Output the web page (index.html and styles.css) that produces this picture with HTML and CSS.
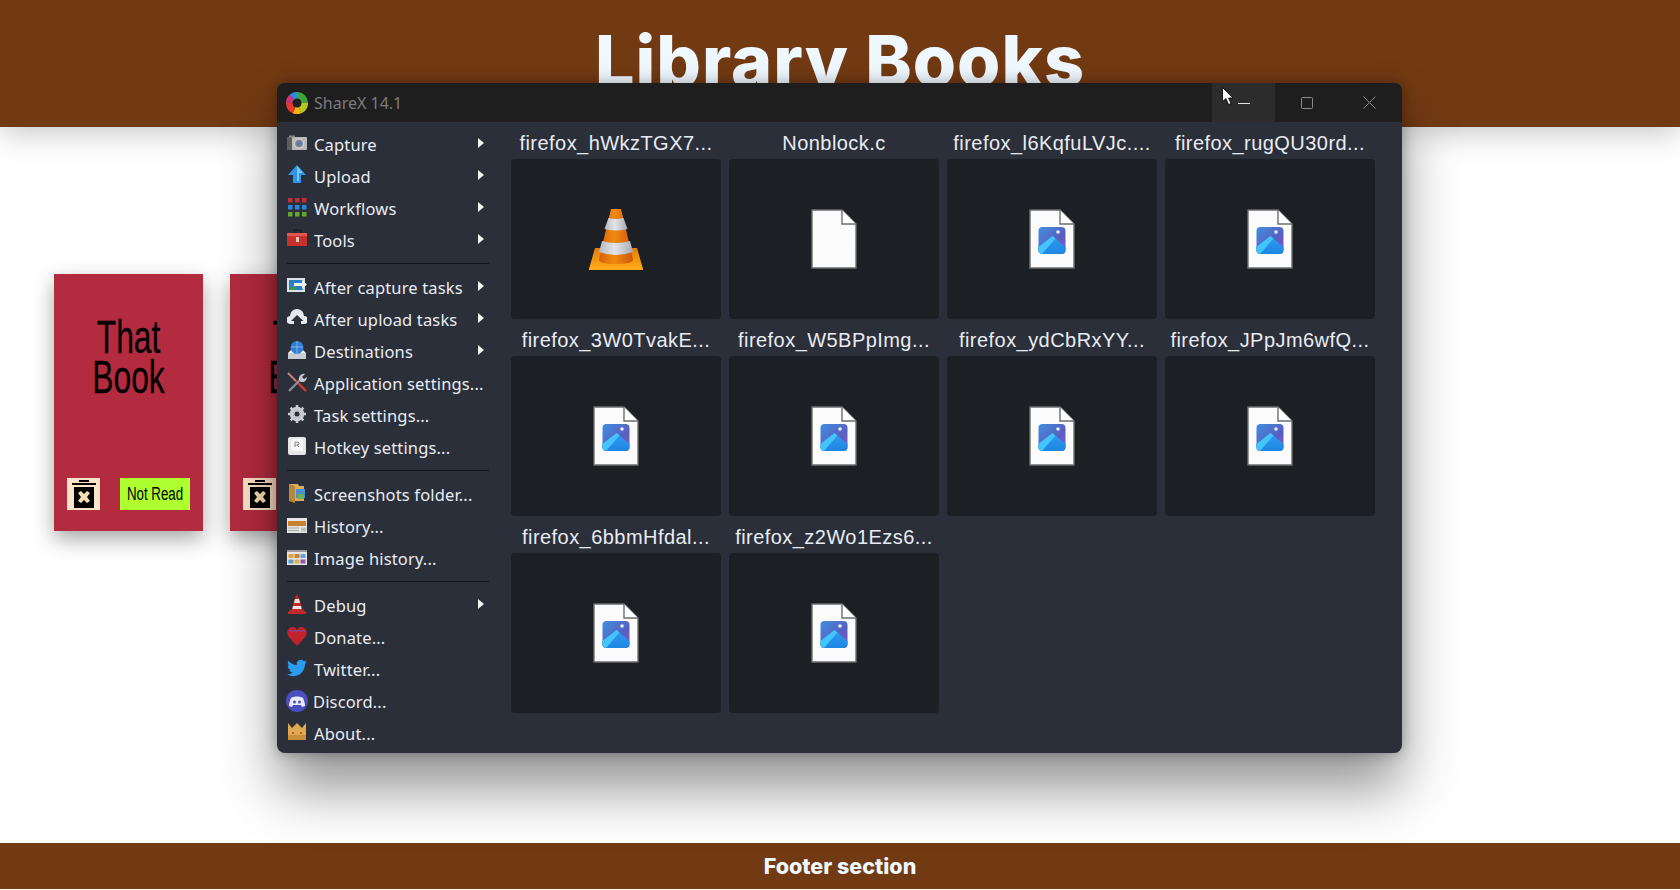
FILE: index.html
```html
<!DOCTYPE html>
<html lang="en">
<head>
<meta charset="utf-8">
<title>Library Books</title>
<link rel="stylesheet" href="styles.css">
</head>
<body>
<svg class="defs" width="0" height="0" aria-hidden="true">
  <defs>
    <linearGradient id="imgbg" x1="0" y1="0" x2="1" y2="1">
      <stop offset="0" stop-color="#3f8fe0"/><stop offset=".6" stop-color="#5a5fc0"/><stop offset="1" stop-color="#8a55c8"/>
    </linearGradient>
    <linearGradient id="mount" x1="0" y1="0" x2="0" y2="1">
      <stop offset="0" stop-color="#2f9cf2"/><stop offset="1" stop-color="#1f86e2"/>
    </linearGradient>
    <linearGradient id="conebody" x1="0" y1="0" x2="1" y2="0">
      <stop offset="0" stop-color="#d85f08"/><stop offset=".45" stop-color="#f08a10"/><stop offset="1" stop-color="#cf5606"/>
    </linearGradient>
    <linearGradient id="coneband" x1="0" y1="0" x2="1" y2="0">
      <stop offset="0" stop-color="#b4b8be"/><stop offset=".45" stop-color="#e2e4e8"/><stop offset="1" stop-color="#a8acb2"/>
    </linearGradient>
    <linearGradient id="conebase" x1="0" y1="0" x2="0" y2="1">
      <stop offset="0" stop-color="#e07f08"/><stop offset="1" stop-color="#ffac1c"/>
    </linearGradient>
    <symbol id="file" viewBox="0 0 46 60">
      <path d="M1 1H31L45 15V59H1Z" fill="#fbfbfb" stroke="#6e6e6e" stroke-width="1.4"/>
      <path d="M31 1V15H45" fill="#fff" stroke="#6e6e6e" stroke-width="1.4"/>
    </symbol>
    <symbol id="fileimg" viewBox="0 0 46 60">
      <use href="#file" width="46" height="60"/>
      <rect x="9.500" y="18" width="27" height="27" rx="4" fill="url(#imgbg)"/>
      <circle cx="29" cy="23" r="1.800" fill="#e8eef8"/>
      <path d="M9.500 38l14-11 13 11v3a4 4 0 0 1-4 4h-19a4 4 0 0 1-4-4z" fill="url(#mount)"/>
      <path d="M9.500 38l14-11 3 2.500L13 45a4 4 0 0 1-3.500-4z" fill="#43c4fb"/>
    </symbol>
    <symbol id="trash" viewBox="0 0 24 30">
      <path d="M0 4h24v2H0zM7 1h10v2H7z" fill="#000"/>
      <path d="M2 8h20v21H2z" fill="#000"/>
      <path d="M6 14l3-2 3 3 3-3 3 2-3 4 3 4-3 2-3-3-3 3-3-2 3-4z" fill="#f5deb3"/>
    </symbol>
  </defs>
</svg>

<header class="site-header"><h1 class="site-title">Library Books</h1></header>

<main class="shelf">
  <article class="card">
    <h2 class="card-title">That<br>Book</h2>
    <div class="card-actions">
      <button class="trash" aria-label="Delete"><svg class="trash-icon"><use href="#trash"/></svg></button>
      <button class="status"><span class="status-text">Not Read</span></button>
    </div>
  </article>
  <article class="card">
    <h2 class="card-title">That<br>Book</h2>
    <div class="card-actions">
      <button class="trash" aria-label="Delete"><svg class="trash-icon"><use href="#trash"/></svg></button>
      <button class="status"><span class="status-text">Not Read</span></button>
    </div>
  </article>
</main>

<footer class="site-footer">Footer section</footer>

<section class="app-window">
  <div class="titlebar">
    <svg class="logo" width="22" height="22" viewBox="0 0 22 22" fill="none" stroke-width="6.500">
      <path d="M11 3.200A7.800 7.800 0 0 1 18.800 11" stroke="#3fa53a"/>
      <path d="M18.800 11A7.800 7.800 0 0 1 14 18.200" stroke="#b5c720"/>
      <path d="M14 18.200A7.800 7.800 0 0 1 8 18.200" stroke="#f5b50a"/>
      <path d="M8 18.200A7.800 7.800 0 0 1 3.200 11" stroke="#e5382e"/>
      <path d="M3.200 11A7.800 7.800 0 0 1 6 5" stroke="#c8347a"/>
      <path d="M6 5A7.800 7.800 0 0 1 11 3.200" stroke="#2a8fe0"/>
      <circle cx="11" cy="11" r="3.600" fill="#1e1e1e" stroke="none"/>
    </svg>
    <span class="app-name">ShareX 14.1</span>
    <div class="win-controls">
      <div class="win-btn is-hover"><svg width="12" height="12" viewBox="0 0 12 12"><path d="M0 6.500h12" stroke="#e2e2e2"/></svg></div>
      <div class="win-btn"><svg width="12" height="12" viewBox="0 0 12 12"><rect x=".5" y=".5" width="11" height="11" rx="1" fill="none" stroke="#8a8a8a"/></svg></div>
      <div class="win-btn"><svg width="13" height="13" viewBox="0 0 13 13"><path d="M.5.500l12 12M12.500.500l-12 12" stroke="#8a8a8a"/></svg></div>
    </div>
  </div>
  <div class="app-body">
    <nav class="menu">
      <div class="menu-item has-sub"><svg class="mi" viewBox="0 0 20 20"><rect x="0" y="4" width="20" height="13" rx="1" fill="#b9b9b9"/><rect x="0" y="4" width="5" height="13" fill="#5d5d5d"/><rect x="2" y="2.500" width="6" height="2" fill="#8a8a8a"/><circle cx="12" cy="10.500" r="4.500" fill="#7c8494" stroke="#e4e4e4"/><circle cx="12" cy="10.500" r="2" fill="#5a76b4"/></svg>Capture</div>
      <div class="menu-item has-sub"><svg class="mi" viewBox="0 0 20 20"><path d="M10 0l9 10h-5v8H6v-8H1z" fill="#2d96ea"/><path d="M10 1l6 7h-4v8h-2z" fill="#7cc4f6"/></svg>Upload</div>
      <div class="menu-item has-sub"><svg class="mi" viewBox="0 0 20 20"><g fill="#c22d36"><rect x="1" y="1" width="4.500" height="4.500"/><rect x="8" y="1" width="4.500" height="4.500"/><rect x="15" y="1" width="4.500" height="4.500"/></g><g fill="#2687e0"><rect x="1" y="8" width="4.500" height="4.500"/><rect x="8" y="8" width="4.500" height="4.500"/><rect x="15" y="8" width="4.500" height="4.500"/></g><g fill="#62a82c"><rect x="1" y="15" width="4.500" height="4.500"/><rect x="8" y="15" width="4.500" height="4.500"/><rect x="15" y="15" width="4.500" height="4.500"/></g></svg>Workflows</div>
      <div class="menu-item has-sub"><svg class="mi" viewBox="0 0 20 20"><path d="M7 4V1h7v3" fill="none" stroke="#222" stroke-width="1.500"/><rect x="0" y="4" width="21" height="13" rx="1" fill="#c8302b"/><rect x="0" y="4" width="21" height="3" fill="#e25650"/><rect x="9" y="8" width="3" height="5" fill="#e0c8c0"/></svg>Tools</div>
      <div class="menu-sep"></div>
      <div class="menu-item has-sub"><svg class="mi" viewBox="0 0 20 20"><rect x="0" y="2" width="18" height="14" fill="#d9e2ea"/><rect x="2" y="4" width="14" height="10" fill="#2c7fc0"/><path d="M2 14l4-5 4 5z" fill="#3d9a48"/><path d="M7 7h8V4l5 4.500-5 4.500v-3H7z" fill="#f2f5f8"/></svg>After capture tasks</div>
      <div class="menu-item has-sub"><svg class="mi" viewBox="0 0 20 20"><path d="M4 16a4 4 0 0 1-1-8 7 7 0 0 1 14 0 4 4 0 0 1 0 8h-3v-3h2.500L10 7l-6 6h3v3z" fill="#e4e7ec"/></svg>After upload tasks</div>
      <div class="menu-item has-sub"><svg class="mi" viewBox="0 0 20 20"><path d="M1 13h18v6H1z" fill="#c9ced4"/><path d="M1 13l3-3h12l3 3z" fill="#eef0f3"/><circle cx="10" cy="7.500" r="6.500" fill="#2f7fd6"/><path d="M4 7h12M10 1v13" stroke="#8fc0f0" stroke-width=".8"/></svg>Destinations</div>
      <div class="menu-item"><svg class="mi" viewBox="0 0 20 20"><path d="M1 1l18 18" stroke="#d8382e" stroke-width="2.400"/><path d="M1 1l8 8" stroke="#9aa0a6" stroke-width="1.400"/><path d="M2 19L13 8" stroke="#8d9299" stroke-width="2.200"/><path d="M12 8a5 5 0 0 1 6-6l-3 3 2 2 3-2a5 5 0 0 1-6 5z" fill="#c5c9cf"/></svg>Application settings...</div>
      <div class="menu-item"><svg class="mi" viewBox="0 0 20 20"><circle cx="10" cy="10" r="5.500" fill="none" stroke="#c9ccd1" stroke-width="3.500"/><path d="M10 1v18M1 10h18M3.600 3.600l12.800 12.800M16.400 3.600L3.600 16.400" stroke="#c9ccd1" stroke-width="2.600"/><circle cx="10" cy="10" r="2.500" fill="#2b2f3a"/></svg>Task settings...</div>
      <div class="menu-item"><svg class="mi" viewBox="0 0 20 20"><rect x="1" y="1" width="18" height="18" rx="2" fill="#e6e6e6"/><rect x="4" y="3" width="12" height="12" fill="#f7f7f7"/><path d="M8 11V6h3l1 1v1l-1 1H8m2 0l2 2" fill="none" stroke="#8a8a8a"/></svg>Hotkey settings...</div>
      <div class="menu-sep"></div>
      <div class="menu-item"><svg class="mi" viewBox="0 0 20 20"><path d="M2 1h9l1 2h5v15H2z" fill="#d9ae5c"/><path d="M2 1l6 2v17l-6-2z" fill="#b9873a"/><rect x="9" y="6" width="9" height="9" fill="#4a90d8"/><rect x="11" y="11" width="6" height="5" fill="#6fb24a"/></svg>Screenshots folder...</div>
      <div class="menu-item"><svg class="mi" viewBox="0 0 20 20"><rect x="0" y="3" width="20" height="15" fill="#e6e6e6"/><rect x="1" y="6" width="18" height="5" fill="#c9822e"/><path d="M1 13h11M1 15.500h11" stroke="#a8a8a8"/><rect x="14" y="12.500" width="5" height="4" fill="#bdbdbd"/></svg>History...</div>
      <div class="menu-item"><svg class="mi" viewBox="0 0 20 20"><rect x="0" y="3" width="20" height="15" fill="#e6e6e6"/><rect x="0" y="3" width="20" height="2" fill="#9a9a9a"/><rect x="1.500" y="7" width="5" height="4" fill="#e0a23a"/><rect x="7.500" y="7" width="5" height="4" fill="#c9822e"/><rect x="13.500" y="7" width="5" height="4" fill="#6a9fd8"/><rect x="1.500" y="12.500" width="5" height="4" fill="#5aa0c8"/><rect x="7.500" y="12.500" width="5" height="4" fill="#d9b04a"/><rect x="13.500" y="12.500" width="5" height="4" fill="#8a5ab0"/></svg>Image history...</div>
      <div class="menu-sep"></div>
      <div class="menu-item has-sub"><svg class="mi" viewBox="0 0 20 20"><path d="M10 0l3 6 2 9 4 3v2H1v-2l4-3 2-9z" fill="#c5282a"/><path d="M8 5h4l1 4H7zM6 12h8l.7 3H5.300z" fill="#ece6e2"/></svg>Debug</div>
      <div class="menu-item"><svg class="mi" viewBox="0 0 20 20"><path d="M10 20L1 10C-1 6 1 1 6 1c2 0 3 1 4 3 1-2 2-3 4-3 5 0 7 5 5 9z" fill="#c1232e"/><path d="M2 6l2-2 2 2 2-2 2 2 2-2 2 2 2-2 2 2" fill="none" stroke="#6a55b8"/></svg>Donate...</div>
      <div class="menu-item"><svg class="mi" viewBox="0 0 24 24"><path d="M23.950 4.570a10 10 0 0 1-2.820.77 4.960 4.960 0 0 0 2.160-2.720 9.900 9.900 0 0 1-3.130 1.190 4.920 4.920 0 0 0-8.380 4.480C7.690 8.090 4.070 6.130 1.640 3.160a4.820 4.820 0 0 0-.67 2.480c0 1.710.87 3.210 2.190 4.100a4.900 4.900 0 0 1-2.230-.62v.06a4.920 4.920 0 0 0 3.950 4.830 5 5 0 0 1-2.210.08 4.940 4.940 0 0 0 4.600 3.420A9.870 9.870 0 0 1 0 19.540a14 14 0 0 0 7.560 2.210c9.050 0 14-7.500 14-13.980 0-.21 0-.42-.02-.63a9.940 9.940 0 0 0 2.460-2.550z" fill="#2a9df0"/></svg>Twitter...</div>
      <div class="menu-item"><svg class="mi wide" viewBox="0 0 22 22"><circle cx="11" cy="11" r="11" fill="#4a4fc0"/><path d="M5 8c3-2 9-2 12 0 1 2 2 5 2 8l-3 1-1-2H7l-1 2-3-1c0-3 1-6 2-8z" fill="#e8eafa"/><circle cx="8.500" cy="12" r="1.500" fill="#4a4fc0"/><circle cx="13.500" cy="12" r="1.500" fill="#4a4fc0"/></svg>Discord...</div>
      <div class="menu-item"><svg class="mi" viewBox="0 0 20 20"><path d="M1 1l4 5 5-5 5 5 4-5v17H1z" fill="#e0a850"/><path d="M1 13h18v5H1z" fill="#c9903e"/><circle cx="6" cy="11" r="1" fill="#b8442e"/><circle cx="14" cy="11" r="1" fill="#b8442e"/></svg>About...</div>
    </nav>
    <div class="files">
      <figure class="file"><figcaption>firefox_hWkzTGX7...</figcaption>
        <div class="tile"><svg width="54" height="61" viewBox="0 0 54 61">
          <path d="M6 39h42l6 21v1H0v-1z" fill="url(#conebase)"/>
          <path d="M22 0h10l12 50q1 5-17 5T10 50z" fill="url(#conebody)"/>
          <path d="M19.500 9q7.500 2 15 0l4 11q-11.500 3-23 0z" fill="url(#coneband)"/>
          <path d="M13 32q14 4 28 0l3 11q-17 6-34 0z" fill="url(#coneband)"/>
        </svg></div></figure>
      <figure class="file"><figcaption>Nonblock.c</figcaption>
        <div class="tile"><svg class="ficon"><use href="#file"/></svg></div></figure>
      <figure class="file"><figcaption>firefox_l6KqfuLVJc....</figcaption>
        <div class="tile"><svg class="ficon"><use href="#fileimg"/></svg></div></figure>
      <figure class="file"><figcaption>firefox_rugQU30rd...</figcaption>
        <div class="tile"><svg class="ficon"><use href="#fileimg"/></svg></div></figure>
      <figure class="file"><figcaption>firefox_3W0TvakE...</figcaption>
        <div class="tile"><svg class="ficon"><use href="#fileimg"/></svg></div></figure>
      <figure class="file"><figcaption>firefox_W5BPpImg...</figcaption>
        <div class="tile"><svg class="ficon"><use href="#fileimg"/></svg></div></figure>
      <figure class="file"><figcaption>firefox_ydCbRxYY...</figcaption>
        <div class="tile"><svg class="ficon"><use href="#fileimg"/></svg></div></figure>
      <figure class="file"><figcaption>firefox_JPpJm6wfQ...</figcaption>
        <div class="tile"><svg class="ficon"><use href="#fileimg"/></svg></div></figure>
      <figure class="file"><figcaption>firefox_6bbmHfdal...</figcaption>
        <div class="tile"><svg class="ficon"><use href="#fileimg"/></svg></div></figure>
      <figure class="file"><figcaption>firefox_z2Wo1Ezs6...</figcaption>
        <div class="tile"><svg class="ficon"><use href="#fileimg"/></svg></div></figure>
    </div>
  </div>
</section>

<svg class="cursor" width="12" height="18" viewBox="0 0 12 18"><path d="M.5.500v14l3.500-3 2.500 6 2.500-1-2.500-5.500H11z" fill="#fff" stroke="#000" stroke-width=".8"/></svg>
</body>
</html>
```
FILE: styles.css
```css
* { box-sizing: border-box; }
html, body { margin: 0; height: 100%; }
body {
  display: flex;
  flex-direction: column;
  height: 890px;
  overflow: hidden;
  background: #fff;
  font-family: "Inter", "Liberation Sans", sans-serif;
}
.defs { position: absolute; }

.site-header {
  height: 127px;
  flex: none;
  background: #723a13;
  box-shadow: 0 4px 30px rgba(0,0,0,.25);
  display: flex;
  justify-content: center;
}
.site-title {
  margin: 19px 0 0;
  font-size: 70px;
  line-height: 84px;
  letter-spacing: 1px;
  font-weight: 800;
  color: #f0f8ff;
}

.shelf {
  flex: 1;
  display: flex;
  align-items: flex-start;
  gap: 27px;
  padding: 147px 0 0 54px;
}
.card {
  width: 149px;
  height: 257px;
  background: #b32b3e;
  box-shadow: 0 8px 20px rgba(0,0,0,.35);
  display: flex;
  flex-direction: column;
  justify-content: space-between;
  padding: 43px 13px 21px;
}
.card-title {
  margin: 0;
  font-family: "Liberation Sans", sans-serif;
  font-weight: 400;
  font-size: 46px;
  line-height: 40px;
  text-align: center;
  color: #000;
  transform: scaleX(.69);
  -webkit-text-stroke: .3px #000;
}
.card-actions { display: flex; justify-content: space-between; }
.trash {
  width: 33px;
  height: 32px;
  padding: 0;
  border: 0;
  background: #fde3c8;
  display: flex;
  align-items: center;
  justify-content: center;
}
.trash-icon { width: 24px; height: 30px; }
.status {
  width: 70px;
  height: 32px;
  padding: 0;
  border: 0;
  background: #adff2f;
  color: #000;
  font-family: "Liberation Sans", sans-serif;
  font-size: 18px;
  display: flex;
  align-items: center;
  justify-content: center;
}
.status-text { flex: none; transform: scaleX(.74); white-space: nowrap; }

.site-footer {
  flex: none;
  height: 46px;
  margin-bottom: 1px;
  background: #723a13;
  color: #f0f8ff;
  font-weight: 800;
  font-size: 21.5px;
  display: flex;
  align-items: center;
  justify-content: center;
}

.app-window {
  position: absolute;
  left: 277px;
  top: 83px;
  width: 1125px;
  height: 670px;
  border-radius: 8px;
  overflow: hidden;
  background: #2b2f3a;
  color: #e8ecf2;
  display: flex;
  flex-direction: column;
  box-shadow: 0 36px 56px rgba(0,0,0,.42), 0 0 14px rgba(0,0,0,.3);
}
.titlebar {
  flex: none;
  height: 39px;
  background: #1e1e1e;
  display: flex;
  align-items: center;
  padding-left: 9px;
}
.logo { flex: none; margin-right: 6px; }
.app-name {
  font-family: "Noto Sans", sans-serif;
  font-size: 16px;
  color: #7c7c7c;
}
.win-controls { margin-left: auto; display: flex; height: 100%; padding-right: 1px; }
.win-btn {
  width: 63px;
  display: flex;
  align-items: center;
  justify-content: center;
}
.win-btn.is-hover { background: #2c2c2c; }

.app-body { flex: 1; display: flex; min-height: 0; }
.menu {
  flex: none;
  width: 234px;
  padding: 6px 0 0 10px;
  font-family: "Noto Sans", sans-serif;
  font-size: 16.5px;
  letter-spacing: .15px;
}
.menu-item {
  position: relative;
  height: 32px;
  display: flex;
  align-items: center;
  gap: 7px;
  white-space: nowrap;
}
.menu-item.has-sub::after {
  content: "";
  position: absolute;
  left: 191px;
  top: 10px;
  border-left: 6px solid #f2f2f2;
  border-top: 5px solid transparent;
  border-bottom: 5px solid transparent;
}
.mi { flex: none; width: 20px; height: 20px; margin-top: -2px; }
.mi.wide { width: 22px; height: 22px; margin: 0 -2px 0 -1px; }
.menu-sep {
  height: 15px;
  width: 202px;
  padding-top: 7px;
}
.menu-sep::before {
  content: "";
  display: block;
  height: 1px;
  background: #15171c;
}

.files {
  flex: none;
  width: 880px;
  display: grid;
  grid-template-columns: repeat(4, 210px);
  grid-auto-rows: 197px;
  column-gap: 8px;
  align-content: start;
}
.file { margin: 0; display: flex; flex-direction: column; }
.file figcaption {
  flex: none;
  height: 37px;
  padding-top: 10px;
  text-align: center;
  font-family: "Liberation Sans", sans-serif;
  font-size: 20px;
  line-height: 23px;
  letter-spacing: .45px;
  color: #e8ecf2;
  white-space: nowrap;
}
.tile {
  height: 160px;
  border-radius: 4px;
  background: #1c1f24;
  display: flex;
  align-items: center;
  justify-content: center;
}
.ficon { width: 46px; height: 60px; }

.cursor {
  position: absolute;
  left: 1222px;
  top: 87px;
}
```
